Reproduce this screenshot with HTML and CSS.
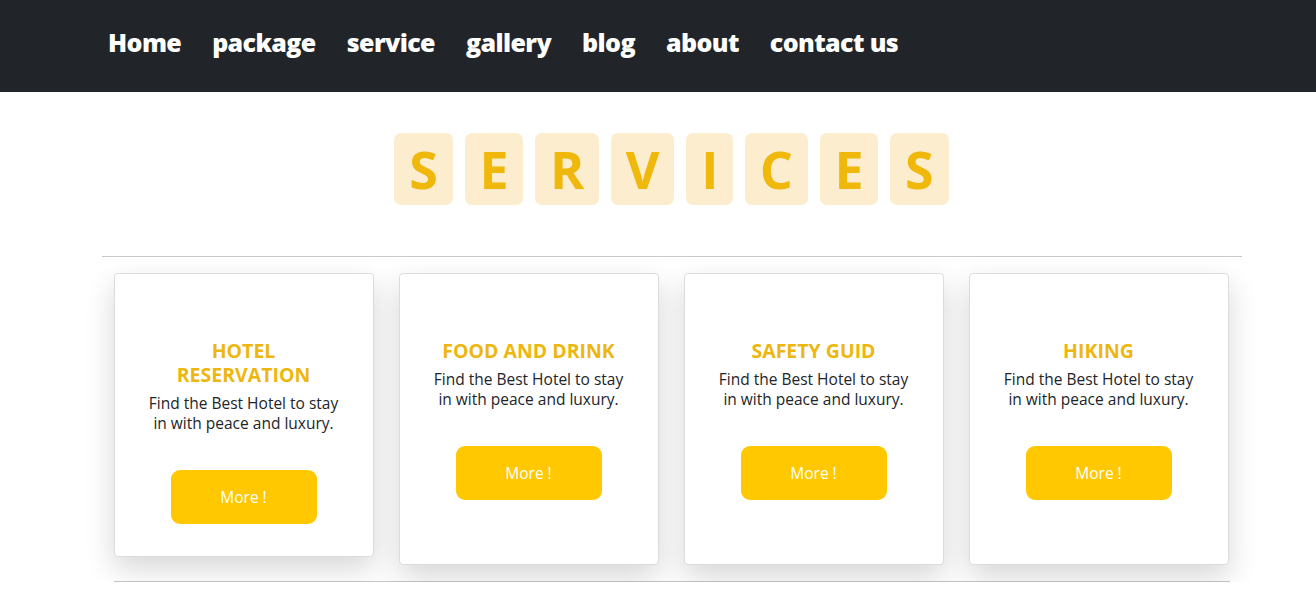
FILE: index.html
```html
<!DOCTYPE html>
<html lang="en">
<head>
<meta charset="utf-8">
<title>Services</title>
<link rel="stylesheet" href="styles.css">
</head>
<body>
<nav class="navbar">
  <a class="nav-link" href="#">Home</a>
  <a class="nav-link" href="#">package</a>
  <a class="nav-link" href="#">service</a>
  <a class="nav-link" href="#">gallery</a>
  <a class="nav-link" href="#">blog</a>
  <a class="nav-link" href="#">about</a>
  <a class="nav-link" href="#">contact us</a>
</nav>
<section class="services">
  <h1 class="heading">
    <span class="tile">S</span><span class="tile">E</span><span class="tile">R</span><span class="tile">V</span><span class="tile">I</span><span class="tile">C</span><span class="tile">E</span><span class="tile">S</span>
  </h1>
  <div class="container">
    <hr class="rule-top">
    <div class="cards">
      <div class="card card-short">
        <h3 class="card-title">HOTEL<br>RESERVATION</h3>
        <p class="card-text">Find the Best Hotel to stay<br>in with peace and luxury.</p>
        <a class="btn" href="#">More !</a>
      </div>
      <div class="card">
        <h3 class="card-title">FOOD AND DRINK</h3>
        <p class="card-text">Find the Best Hotel to stay<br>in with peace and luxury.</p>
        <a class="btn" href="#">More !</a>
      </div>
      <div class="card">
        <h3 class="card-title">SAFETY GUID</h3>
        <p class="card-text">Find the Best Hotel to stay<br>in with peace and luxury.</p>
        <a class="btn" href="#">More !</a>
      </div>
      <div class="card">
        <h3 class="card-title">HIKING</h3>
        <p class="card-text">Find the Best Hotel to stay<br>in with peace and luxury.</p>
        <a class="btn" href="#">More !</a>
      </div>
    </div>
    <hr class="rule-bottom">
  </div>
</section>
</body>
</html>
```
FILE: styles.css
```css
* { box-sizing: border-box; }
html, body { margin: 0; padding: 0; }
body {
  font-family: "Open Sans", "Noto Sans", sans-serif;
  color: #212529;
  background: #fff;
  overflow: hidden;
}
.navbar {
  background: #212529;
  height: 92px;
  display: flex;
  align-items: center;
  gap: 31px;
  padding: 0 0 0 108px;
}
.nav-link {
  color: #fff;
  text-decoration: none;
  font-weight: 800;
  font-size: 25px;
  letter-spacing: -0.6px;
  line-height: 1;
  padding-bottom: 8px;
}
.services {
  width: 1343px;
  padding-top: 41px;
}
.heading {
  margin: 0;
  display: flex;
  justify-content: center;
  gap: 12px;
}
.tile {
  display: flex;
  align-items: center;
  justify-content: center;
  height: 72px;
  padding: 0 14.75px;
  background: #fbedcd;
  color: #efb80b;
  border-radius: 7px;
  font-size: 52px;
  font-weight: 700;
  line-height: 1;
}
.container {
  width: 1140px;
  margin: 0 auto;
  padding: 0 12px;
}
.rule-top {
  margin: 51px -12px 16px;
  border: 0;
  border-top: 1px solid #c8c8c8;
}
.cards {
  display: flex;
  gap: 25px;
  align-items: flex-start;
}
.card {
  width: 260px;
  height: 292px;
  background: #fff;
  border: 1px solid #dcdcdc;
  border-radius: 4px;
  box-shadow: 0 12px 30px rgba(0, 0, 0, 0.16);
  display: flex;
  flex-direction: column;
  align-items: center;
  text-align: center;
  padding-top: 65px;
}
.card-short { height: 284px; }
.card-title {
  margin: 0;
  color: #edb70f;
  font-size: 19.5px;
  font-weight: 700;
  line-height: 24px;
}
.card-text {
  margin: 7px 0 0;
  font-size: 15.5px;
  line-height: 19.5px;
}
.btn {
  margin-top: 37px;
  width: 146px;
  height: 54px;
  background: #ffc800;
  color: #fff;
  border-radius: 9px;
  display: flex;
  align-items: center;
  justify-content: center;
  text-decoration: none;
  font-size: 15.5px;
}
.rule-bottom {
  margin: 16px 0 0;
  border: 0;
  border-top: 1px solid #c8c8c8;
}
```
